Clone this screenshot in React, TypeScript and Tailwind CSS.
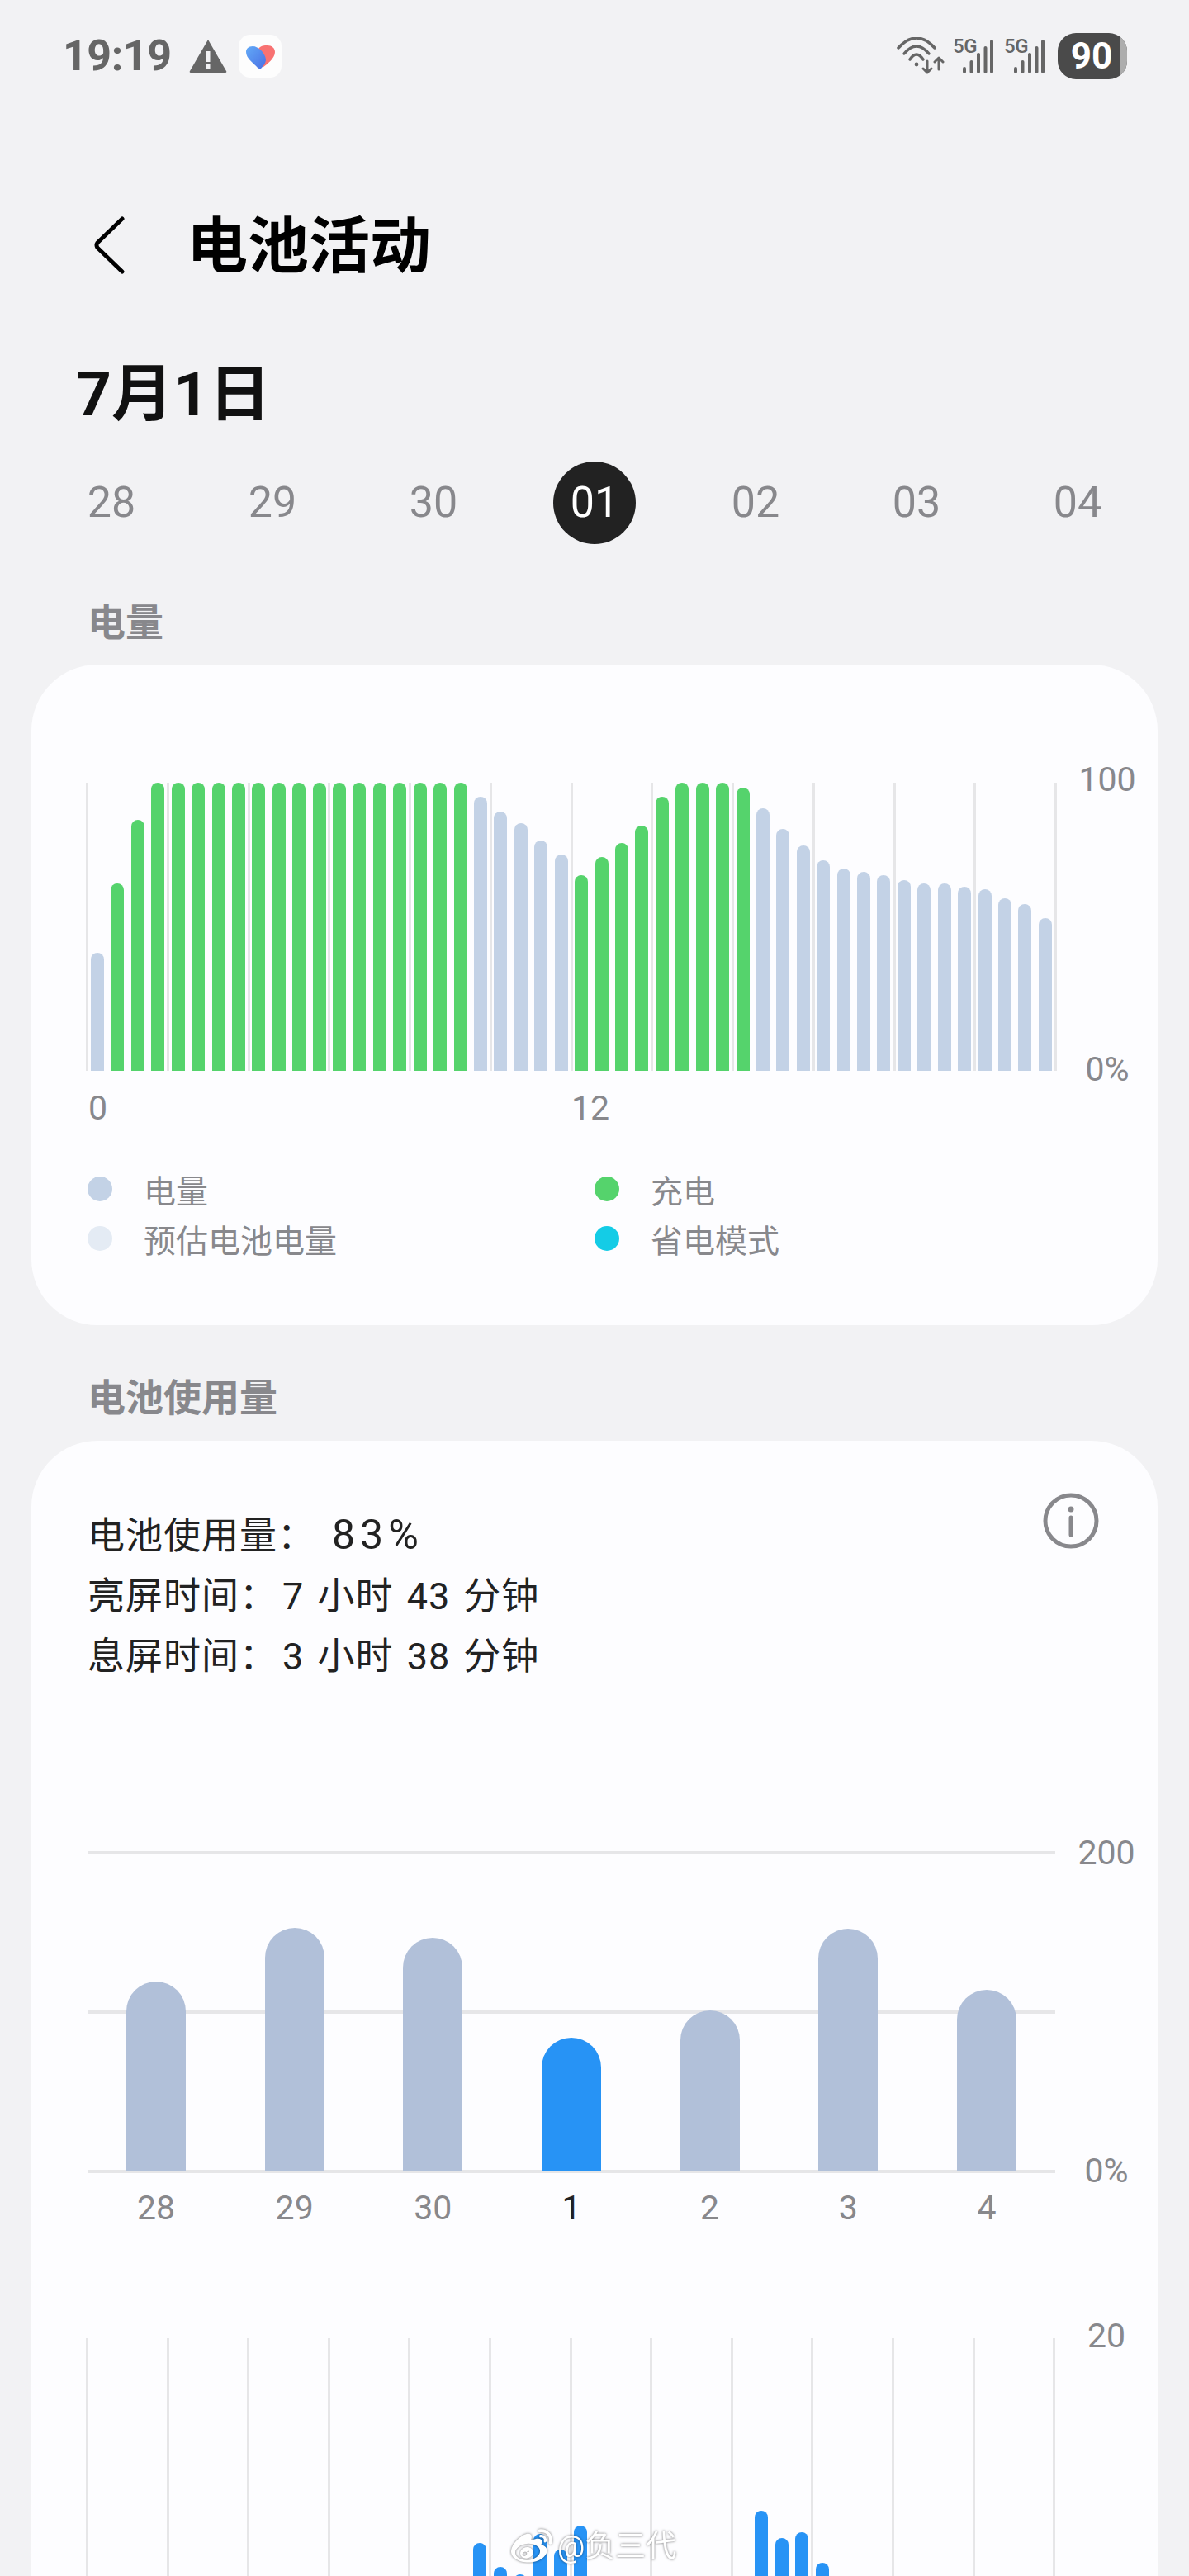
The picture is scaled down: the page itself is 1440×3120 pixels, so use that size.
import React from 'react';
import { FaWeibo } from 'react-icons/fa';

type Kind = 'b' | 'g';

// battery level per half hour: [fraction of chart height, blue or green]
const LEVELS: [number, Kind][] = [
  [0.41, 'b'], [0.65, 'g'], [0.871, 'g'],
  ...Array.from({ length: 16 }, () => [1, 'g'] as [number, Kind]),
  [0.95, 'b'], [0.9, 'b'], [0.861, 'b'], [0.8, 'b'], [0.75, 'b'],
  [0.68, 'g'], [0.741, 'g'], [0.791, 'g'], [0.851, 'g'], [0.95, 'g'], [1, 'g'], [1, 'g'], [1, 'g'], [0.982, 'g'],
  [0.91, 'b'], [0.841, 'b'], [0.781, 'b'], [0.731, 'b'], [0.701, 'b'], [0.69, 'b'], [0.68, 'b'], [0.661, 'b'],
  [0.65, 'b'], [0.65, 'b'], [0.64, 'b'], [0.63, 'b'], [0.6, 'b'], [0.58, 'b'], [0.53, 'b'],
];

const DAYS = ['28', '29', '30', '01', '02', '03', '04'];

const USAGE = [
  { day: '28', h: 230 },
  { day: '29', h: 295 },
  { day: '30', h: 283 },
  { day: '1', h: 162, active: true },
  { day: '2', h: 195 },
  { day: '3', h: 294 },
  { day: '4', h: 220 },
];

// slot index -> bar height, chart 3 runs past the bottom of the page
const HOURLY: Record<number, number> = {
  19: 72, 20: 43, 21: 34, 22: 83, 23: 64, 24: 93,
  33: 111, 34: 78, 35: 85, 36: 48,
};

const GRID_LINES = Array.from({ length: 13 }, (_, i) => i);

function VLines() {
  return (
    <div className="[grid-area:1/1] flex justify-between">
      {GRID_LINES.map((i) => (
        <div key={i} className="w-[3px] h-full bg-[#e6e6e8]" />
      ))}
    </div>
  );
}

function AxisLabel({ children }: { children: React.ReactNode }) {
  return <div className="h-[44px] leading-[44px] text-[41px] text-[#88888c]">{children}</div>;
}

function SignalIcon() {
  return (
    <div className="flex items-start">
      <span className="text-[24px] leading-[22px] font-medium text-[#666] w-[30px] tracking-[-0.5px]">5G</span>
      <svg width="38" height="46" viewBox="0 0 38 46" className="-ml-[19px]" fill="#666">
        <rect x="1" y="36" width="4" height="8" rx="2" />
        <rect x="9.5" y="28" width="4" height="16" rx="2" />
        <rect x="18" y="19" width="4" height="25" rx="2" />
        <rect x="26.5" y="11" width="4" height="33" rx="2" />
        <rect x="34" y="3" width="4" height="41" rx="2" />
      </svg>
    </div>
  );
}

function StatusBar() {
  return (
    <div className="h-[56px] mt-[40px] pl-[76px] pr-[75px] flex items-center justify-between">
      <div className="flex items-center">
        <span className="text-[52px] font-bold text-[#666] leading-none tracking-[-0.5px]">19:19</span>
        <svg width="46" height="42" viewBox="0 0 46 42" className="ml-[21px]">
          <path
            fillRule="evenodd"
            fill="#666"
            d="M23 1 L45 39 Q46 41 44 41 L2 41 Q0 41 1 39 Z M20.5 15 L25.5 15 L25.5 28 L20.5 28 Z M20.5 31 L25.5 31 L25.5 36 L20.5 36 Z"
          />
        </svg>
        <div className="ml-[14px] w-[52px] h-[52px] rounded-[14px] bg-[#fdfdfd]">
          <svg width="52" height="52" viewBox="0 0 52 52">
            <defs>
              <linearGradient id="heartBlue" x1="0" y1="0" x2="1" y2="1">
                <stop offset="0" stopColor="#62aaf7" />
                <stop offset="1" stopColor="#4a70e4" />
              </linearGradient>
            </defs>
            <path fill="#f87272" d="M24 17 C27 13 31 13 35 13 C40 13 44 16 44 21 C44 29 34 36 29 40 Z" />
            <path
              fill="url(#heartBlue)"
              d="M17 14 C24 14 32 22 33 30 C33 34 30 38 27 41 C25 41 24 41 23 40 C18 34 9 29 9 21 C9 17 12 14 17 14 Z"
            />
          </svg>
        </div>
      </div>

      <div className="flex items-center">
        <svg width="58" height="46" viewBox="0 0 58 46" fill="none" stroke="#666" strokeWidth="3.5" strokeLinecap="round" strokeLinejoin="round">
          <path d="M2 13 Q24 -11 46 13" />
          <path d="M9 20 Q24 2 39 20" />
          <path d="M16 27 Q24 15 32 27" />
          <circle cx="24" cy="33" r="2.4" fill="#666" stroke="none" />
          <path d="M37 29 V43 M32 38 L37 43 L42 38" strokeWidth="3" />
          <path d="M51 39 V25 M46 30 L51 25 L56 30" strokeWidth="3" />
        </svg>
        <div className="ml-[10px]"><SignalIcon /></div>
        <div className="ml-[13px]"><SignalIcon /></div>
        <div className="ml-[16px] w-[84px] h-[56px] rounded-[22px] overflow-hidden flex bg-[#4a4a4a]">
          <div className="flex-1 flex items-center justify-center text-white text-[44px] font-bold leading-none pl-[7px]">90</div>
          <div className="w-[9px] bg-[#adadad]" />
        </div>
      </div>
    </div>
  );
}

function LegendItem({ color, label }: { color: string; label: string }) {
  return (
    <div className="flex items-center h-[60px]">
      <div className={`w-[30px] h-[30px] rounded-full ${color}`} />
      <span className="ml-[38px] text-[39px] text-[#88888c] leading-[60px] pt-[8px]">{label}</span>
    </div>
  );
}

export default function App() {
  return (
    <div className="relative w-[1440px] h-[3120px] overflow-hidden bg-[#f2f2f4] font-['Roboto','Noto_Sans_CJK_SC',sans-serif]">
      <StatusBar />

      {/* header */}
      <div className="mt-[161px] h-[80px] pl-[113px] flex items-center">
        <svg width="38" height="70" viewBox="0 0 38 70" fill="none" stroke="#000" strokeWidth="5" strokeLinecap="round" strokeLinejoin="round">
          <path d="M35 3 L5 32 Q3 35 5 38 L35 67" />
        </svg>
        <h1 className="ml-[75px] pt-[4px] text-[74px] leading-[80px] font-semibold text-black">电池活动</h1>
      </div>

      <div className="mt-[100px] h-[80px] pl-[92px] text-[75px] leading-[80px] font-bold text-[#111]">7月1日</div>

      {/* date strip */}
      <div className="mt-[42px] px-[85px] flex justify-between">
        {DAYS.map((d) => (
          <div
            key={d}
            className={
              d === '01'
                ? 'w-[100px] h-[100px] rounded-full flex items-center justify-center text-[52px] bg-[#222222] text-white'
                : 'w-[100px] h-[100px] rounded-full flex items-center justify-center text-[52px] text-[#88888c]'
            }
          >
            {d}
          </div>
        ))}
      </div>

      <div className="mt-[65px] h-[60px] pl-[106px] text-[46px] leading-[60px] font-bold text-[#88888c]">电量</div>

      {/* battery level card */}
      <section className="mt-[21px] mx-[38px] h-[800px] rounded-[80px] bg-[#fdfdff] pt-[143px] pl-[66px]">
        <div className="flex">
          <div className="grid w-[1176px] h-[349px]">
            <VLines />
            <div className="[grid-area:1/1] flex items-end justify-between px-[6px]">
              {LEVELS.map(([level, kind], i) => (
                <div
                  key={i}
                  className={kind === 'g' ? 'w-[16px] rounded-t-full bg-[#55d36c]' : 'w-[16px] rounded-t-full bg-[#c3d2e6]'}
                  style={{ height: level * 349 }}
                />
              ))}
            </div>
          </div>
          <div className="w-[122px] -mt-[26px] -mb-[20px] flex flex-col justify-between items-center">
            <AxisLabel>100</AxisLabel>
            <AxisLabel>0%</AxisLabel>
          </div>
        </div>

        <div className="mt-[23px] ml-[3px] flex">
          <div className="w-[585px]"><AxisLabel>0</AxisLabel></div>
          <AxisLabel>12</AxisLabel>
        </div>

        <div className="mt-[46px] ml-[2px] grid grid-cols-[614px_1fr]">
          <LegendItem color="bg-[#c3d2e6]" label="电量" />
          <LegendItem color="bg-[#55d36c]" label="充电" />
          <LegendItem color="bg-[#e4ebf4]" label="预估电池电量" />
          <LegendItem color="bg-[#14cce6]" label="省电模式" />
        </div>
      </section>

      <div className="mt-[58px] h-[60px] pl-[106px] text-[46px] leading-[60px] font-bold text-[#88888c]">电池使用量</div>

      {/* usage card */}
      <section className="mt-[22px] mx-[38px] h-[1500px] rounded-[80px] bg-[#fdfdff]">
        <div className="pt-[63px] pl-[68px] pr-[71px] flex justify-between items-start">
          <div className="pt-[15px] text-[45px] leading-[73px] tracking-[1px] [word-spacing:4px] text-[#222]">
            <div>
              电池使用量：<span className="ml-[20px] text-[50px] tracking-[6px]">83%</span>
            </div>
            <div>
              亮屏时间：<span className="ml-[6px]">7 小时 43 分钟</span>
            </div>
            <div>
              息屏时间：<span className="ml-[6px]">3 小时 38 分钟</span>
            </div>
          </div>
          <svg width="68" height="68" viewBox="0 0 68 68" fill="none" stroke="#88888c" strokeWidth="5">
            <circle cx="34" cy="34" r="31" />
            <circle cx="34" cy="20" r="3.5" fill="#88888c" stroke="none" />
            <path d="M34 30 V51" strokeLinecap="round" />
          </svg>
        </div>

        <div className="mt-[199px] ml-[68px] flex">
          <div className="grid w-[1172px] h-[390px]">
            <div className="[grid-area:1/1] flex flex-col justify-between">
              <div className="h-[4px] bg-[#e6e6e8]" />
              <div className="h-[4px] bg-[#e6e6e8]" />
              <div className="h-[4px] bg-[#e6e6e8]" />
            </div>
            <div className="[grid-area:1/1] flex items-end justify-between px-[47px] pb-[2px]">
              {USAGE.map((u) => (
                <div
                  key={u.day}
                  className={u.active ? 'w-[72px] rounded-t-full bg-[#2793f5]' : 'w-[72px] rounded-t-full bg-[#b1c0d9]'}
                  style={{ height: u.h }}
                />
              ))}
            </div>
          </div>
          <div className="w-[124px] -mt-[20px] -mb-[19px] flex flex-col justify-between items-center">
            <AxisLabel>200</AxisLabel>
            <AxisLabel>0%</AxisLabel>
          </div>
        </div>

        <div className="mt-[20px] ml-[68px] w-[1172px] px-[47px] flex justify-between">
          {USAGE.map((u) => (
            <div
              key={u.day}
              className={
                u.active
                  ? 'w-[72px] text-center h-[44px] leading-[44px] text-[41px] text-[#222]'
                  : 'w-[72px] text-center h-[44px] leading-[44px] text-[41px] text-[#88888c]'
              }
            >
              {u.day}
            </div>
          ))}
        </div>

        <div className="mt-[136px] ml-[66px] flex">
          <div className="grid w-[1176px] h-[320px]">
            <VLines />
            <div className="[grid-area:1/1] flex items-end justify-between px-[6px]">
              {LEVELS.map((_, i) => (
                <div
                  key={i}
                  className="w-[16px] rounded-t-full bg-[#2793f5]"
                  style={{ height: HOURLY[i] ?? 0 }}
                />
              ))}
            </div>
          </div>
          <div className="w-[124px] -mt-[25px] flex flex-col items-center">
            <AxisLabel>20</AxisLabel>
          </div>
        </div>
      </section>

      {/* weibo watermark */}
      <div className="absolute left-[619px] top-[3060px] flex items-center text-white [filter:drop-shadow(0_0_1.5px_rgba(0,0,0,0.55))]">
        <FaWeibo size={50} />
        <span className="ml-[6px] text-[37px] leading-[48px]">@负三代</span>
      </div>
    </div>
  );
}
